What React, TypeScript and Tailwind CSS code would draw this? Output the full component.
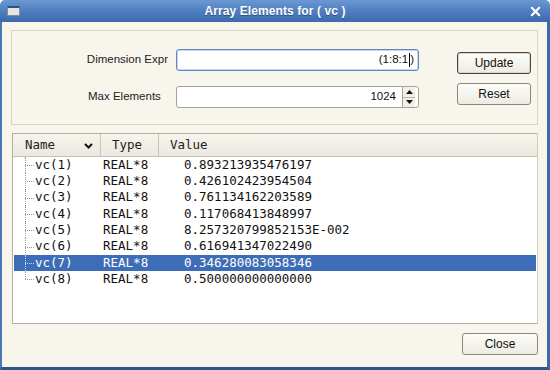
import React from "react";

const rows = [
  ["vc(1)", "REAL*8", "0.893213935476197"],
  ["vc(2)", "REAL*8", "0.426102423954504"],
  ["vc(3)", "REAL*8", "0.761134162203589"],
  ["vc(4)", "REAL*8", "0.117068413848997"],
  ["vc(5)", "REAL*8", "8.257320799852153E-002"],
  ["vc(6)", "REAL*8", "0.616941347022490"],
  ["vc(7)", "REAL*8", "0.346280083058346"],
  ["vc(8)", "REAL*8", "0.500000000000000"],
];

const sans = { fontFamily: '"Liberation Sans", Arial, sans-serif' };
const mono = { fontFamily: '"DejaVu Sans Mono", monospace' };

function Btn({ label, className = "" }: { label: string; className?: string }) {
  return (
    <div
      className={`flex items-center justify-center rounded-[3px] border border-[#8a8878] bg-gradient-to-b from-[#fdfcf8] to-[#ecebe3] text-[12px] text-[#111] ${className}`}
      style={sans}
    >
      {label}
    </div>
  );
}

export default function App() {
  return (
    <div className="w-[550px] h-[370px] flex flex-col overflow-hidden" style={sans}>
      {/* Title bar */}
      <div className="h-[22px] shrink-0 flex items-center bg-gradient-to-b from-[#6b98d3] via-[#4f7fc0] to-[#3c6aad] rounded-t-[5px] px-[7px]">
        <div className="w-[13px] h-[10px] bg-[#e4e4e0] border border-[#7d8ca0] border-t-[2px] border-t-[#2f4f86]" />
        <div className="flex-1 text-center text-white font-bold text-[12px] tracking-[0.1px] [text-shadow:0_1px_0_#2c4f86]">
          Array Elements for ( vc )
        </div>
        <svg width="11" height="11" viewBox="0 0 12 12" className="mr-[2px]">
          <path d="M2 2 L10 10 M10 2 L2 10" stroke="white" strokeWidth="2.4" strokeLinecap="round" />
        </svg>
      </div>
      {/* Body */}
      <div className="flex-1 flex flex-col bg-[#f8f6ec] border-l-[2px] border-r-[3px] border-b-[3px] border-l-[#4a76b3] border-r-[#3e69a8] border-b-[#2e558e] pl-[9px] pr-[9px] pt-[8px]">
        {/* Group box */}
        <div className="h-[95px] border border-[#d8d5c6] flex">
          <div className="flex flex-col pt-[18px] gap-[15px]">
            <div className="flex items-center h-[22px]">
              <div className="w-[164px] text-right pr-[8px] text-[11.5px] text-[#222]">Dimension Expr</div>
              <div className="w-[243px] h-[22px] rounded-[3px] border border-[#5e87bf] bg-white flex items-center justify-end pr-[4px] text-[11.5px] text-[#111] shadow-[inset_0_0_0_1px_#c9d8ef]">
                (1:8:1<span className="inline-block w-[1px] h-[14px] bg-black mx-[0.5px]" />)
              </div>
            </div>
            <div className="flex items-center h-[22px]">
              <div className="w-[164px] text-left pl-[76px] text-[11.5px] text-[#222]">Max Elements</div>
              <div className="w-[243px] h-[22px] rounded-[3px] border border-[#a5a394] bg-white flex items-center">
                <div className="flex-1 text-right pr-[6px] text-[11.5px] text-[#111]">1024</div>
                <div className="w-[13px] h-full flex flex-col border-l border-[#a5a394] mr-[3px]">
                  <div className="flex-1 flex items-center justify-center bg-[#f1efe6] border-b border-[#b9b7a8]">
                    <svg width="7" height="4" viewBox="0 0 7 4"><path d="M0 4 L3.5 0 L7 4 Z" fill="#111" /></svg>
                  </div>
                  <div className="flex-1 flex items-center justify-center bg-[#f1efe6]">
                    <svg width="7" height="4" viewBox="0 0 7 4"><path d="M0 0 L3.5 4 L7 0 Z" fill="#111" /></svg>
                  </div>
                </div>
              </div>
            </div>
          </div>
          <div className="flex flex-col pt-[21px] gap-[9px] ml-[38px]">
            <Btn label="Update" className="w-[74px] h-[22px] border-[#444] shadow-[inset_0_0_0_1px_#d9d7cc]" />
            <Btn label="Reset" className="w-[74px] h-[22px]" />
          </div>
        </div>
        {/* Table */}
        <div className="mt-[8px] ml-[1px] h-[191px] border border-[#b3b0a1] border-r-[#d0cdbf] bg-white flex flex-col" style={mono}>
          <div className="h-[23px] shrink-0 flex bg-gradient-to-b from-[#f6f4ec] to-[#ebe9df] border-b border-[#c4c1b1] text-[12.5px] text-[#222]">
            <div className="w-[88px] flex items-center pl-[12px] border-r border-[#c9c6b8] relative">
              Name
              <svg width="9" height="6" viewBox="0 0 9 6" className="absolute left-[71px] top-[9px]">
                <path d="M1 1 L4.5 4.5 L8 1" stroke="#111" strokeWidth="2" fill="none" />
              </svg>
            </div>
            <div className="w-[58px] flex items-center pl-[11px] border-r border-[#c9c6b8]">Type</div>
            <div className="flex-1 flex items-center pl-[11px]">Value</div>
          </div>
          <div className="flex flex-col relative">
            {rows.map((r, i) => {
              const sel = i === 6;
              return (
                <div
                  key={i}
                  className={`h-[16.3px] flex items-center text-[12.5px] mx-[1px] relative ${sel ? "bg-[#3d6db6] text-white" : "text-[#111]"}`}
                >
                  <div
                    className={`absolute left-[11px] w-0 border-l border-dotted ${sel ? "border-[#c8d6ee]" : "border-[#9a9a9a]"} ${i === rows.length - 1 ? "top-0 h-1/2" : "top-0 h-full"}`}
                  />
                  <div
                    className={`absolute left-[11px] top-1/2 w-[9px] h-0 border-t border-dotted ${sel ? "border-[#c8d6ee]" : "border-[#9a9a9a]"}`}
                  />
                  <div className="w-[88px] pl-[21px] whitespace-nowrap">{r[0]}</div>
                  <div className="w-[82px] pl-[1px] whitespace-nowrap">{r[1]}</div>
                  <div className="flex-1 whitespace-nowrap">{r[2]}</div>
                </div>
              );
            })}
          </div>
        </div>
        {/* Close */}
        <div className="flex justify-end mt-[9px]">
          <Btn label="Close" className="w-[76px] h-[22px]" />
        </div>
      </div>
    </div>
  );
}
